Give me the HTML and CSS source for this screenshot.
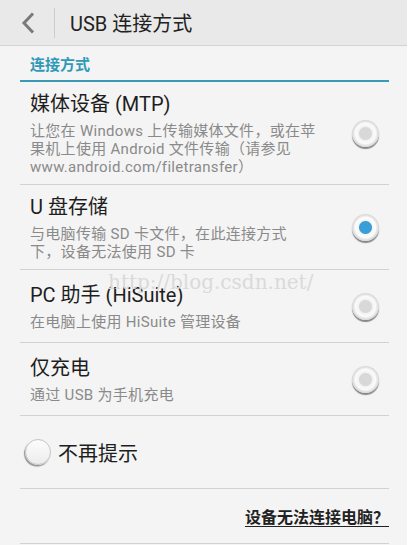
FILE: index.html
```html
<!DOCTYPE html>
<html lang="zh-CN">
<head>
    <meta charset="UTF-8">
    <meta name="viewport" content="width=device-width, initial-scale=1.0">
    <title>USB 连接方式</title>
    <link rel="stylesheet" href="styles.css">
</head>
<body>

<div class="screen">
    <div class="topbar">
        <svg class="back" width="14" height="22" viewBox="0 0 14 22">
            <path d="M12 1.5 L3 11 L12 20.5" fill="none" stroke="#7a7a7a" stroke-width="3" stroke-linejoin="miter"/>
        </svg>
        <span class="topbar-sep"></span>
        <span class="topbar-title">USB 连接方式</span>
    </div>

    <div class="content">
        <div class="section-title">连接方式</div>

        <div class="option">
            <div class="option-text">
                <div class="option-name">媒体设备 (MTP)</div>
                <div class="option-desc">让您在 Windows 上传输媒体文件，或在苹<br>果机上使用 Android 文件传输（请参见<br>www.android.com/filetransfer）</div>
            </div>
            <span class="radio"></span>
        </div>

        <div class="option">
            <div class="option-text">
                <div class="option-name">U 盘存储</div>
                <div class="option-desc">与电脑传输 SD 卡文件，在此连接方式<br>下，设备无法使用 SD 卡</div>
            </div>
            <span class="radio checked"></span>
        </div>

        <div class="option">
            <div class="option-text">
                <div class="option-name">PC 助手 (HiSuite)</div>
                <div class="option-desc">在电脑上使用 HiSuite 管理设备</div>
            </div>
            <span class="radio"></span>
        </div>

        <div class="option">
            <div class="option-text">
                <div class="option-name">仅充电</div>
                <div class="option-desc">通过 USB 为手机充电</div>
            </div>
            <span class="radio"></span>
        </div>

        <div class="remember">
            <span class="check"></span>
            <span class="remember-label">不再提示</span>
        </div>

        <div class="help">
            <a class="help-link" href="#">设备无法连接电脑？</a>
        </div>
    </div>

    <div class="watermark">http://blog.csdn.net/</div>
</div>

</body>
</html>
```

FILE: styles.css
```css
body { margin: 0; background: #fff; font-family: Roboto, "Noto Sans CJK SC", sans-serif; }

.screen { position: relative; width: 407px; height: 545px; background: #f4f4f4; overflow: hidden; }

.topbar { display: flex; align-items: center; height: 45px; background: #e9e9e9; border-bottom: 1px solid #d3d3d3; }
.back { margin-left: 21px; }
.topbar-sep { width: 1px; height: 30px; margin-left: 19px; background: #cdcdcd; }
.topbar-title { margin-left: 15px; font-size: 20px; color: #222; }

.content { padding: 0 18px 0 20px; }

.section-title { padding: 9px 0 5px 10px; line-height: 20px; font-size: 15px; font-weight: bold; color: #2f9ab8; border-bottom: 2px solid #3a9ab6; }

.option { display: flex; align-items: center; min-height: 56px; padding: 8px 10px 8px 10px; border-bottom: 1px solid #d2d2d2; }
.option-text { flex: 1; }
.option-name { font-size: 20px; line-height: 28px; color: #1e1e1e; }
.option-desc { margin-top: 4px; font-size: 15px; line-height: 18px; letter-spacing: 0.3px; color: #8a8a8a; white-space: nowrap; }

.radio { flex: none; width: 27px; height: 27px; border-radius: 50%; background: radial-gradient(circle, #d8d8d8 0 6px, #f2f2f2 7px, #fbfbfb 10px, #e4e4e4 12px, #d4d4d4 13.5px); box-shadow: 0 2px 1px rgba(0, 0, 0, 0.45); }
.radio.checked { background: radial-gradient(circle, #3a9fd8 0 6px, #f4f4f4 7px, #fdfdfd 10px, #e4e4e4 12px, #d4d4d4 13.5px); }

.remember { display: flex; align-items: center; height: 72px; padding-left: 5px; border-bottom: 1px solid #d2d2d2; }
.check { width: 24px; height: 24px; border-radius: 50%; border: 1px solid #c4c4c4; background: linear-gradient(#fdfdfd, #ececec); box-shadow: -1px 1.5px 1px rgba(0, 0, 0, 0.4); }
.remember-label { margin-left: 7px; font-size: 20px; color: #1e1e1e; }

.help { display: flex; justify-content: flex-end; align-items: center; height: 54px; border-bottom: 1px solid #d2d2d2; }
.help-link { font-size: 16px; font-weight: bold; color: #222; text-decoration: underline; text-underline-offset: 3px; }

.watermark { position: absolute; left: 108px; top: 270px; font-family: "DejaVu Serif", serif; font-size: 20px; color: #dadada; }
```
